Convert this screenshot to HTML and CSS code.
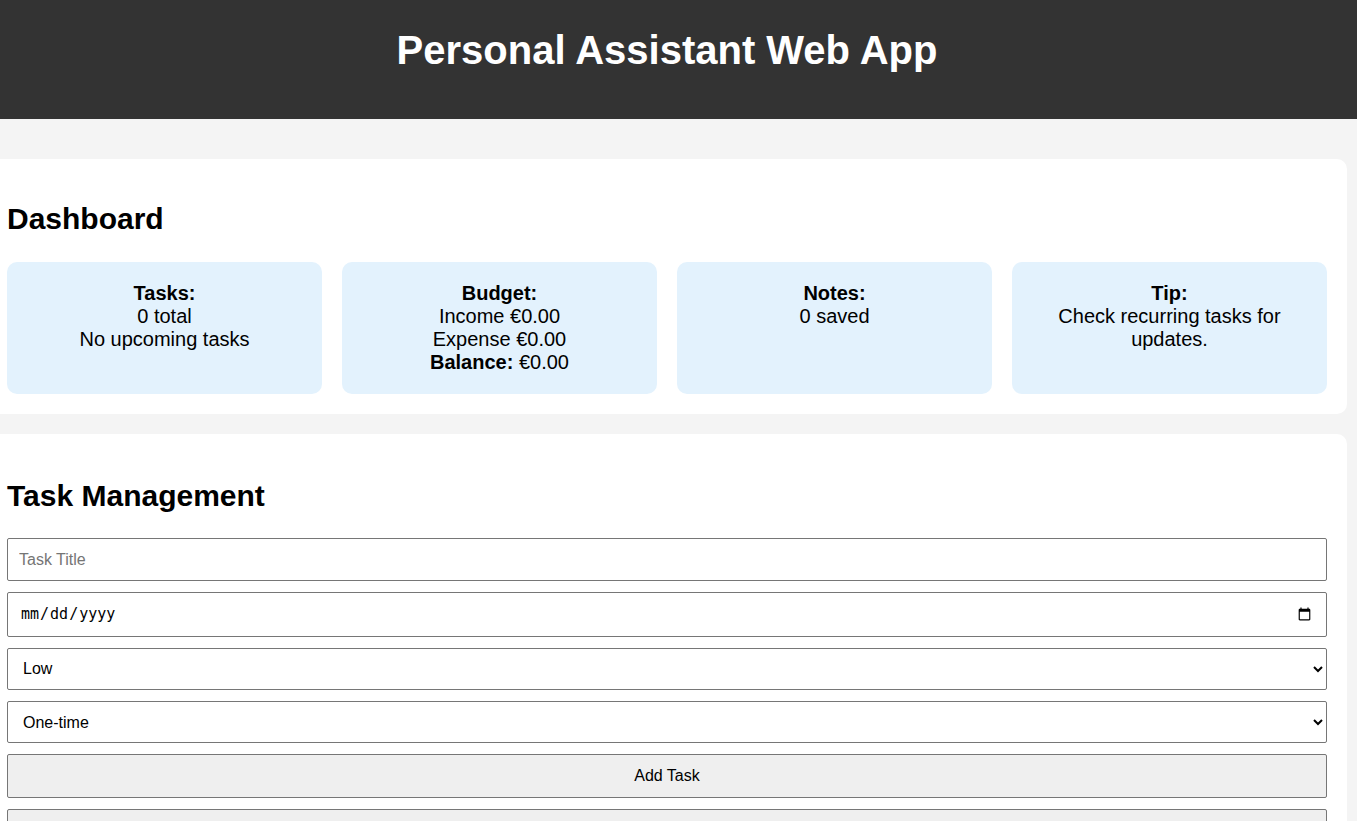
FILE: index.html
```html
<!DOCTYPE html>
<html lang="en">
<head>
<meta charset="utf-8">
<title>Personal Assistant Web App</title>
<link rel="stylesheet" href="styles.css">
</head>
<body>
<div class="page">
  <header class="app-header">
    <h1>Personal Assistant Web App</h1>
  </header>
  <main class="app-main">
    <section class="card">
      <h2 class="card-title dash-title">Dashboard</h2>
      <div class="dash-grid">
        <div class="dash-box"><strong>Tasks:</strong><br>0 total<br>No upcoming tasks</div>
        <div class="dash-box"><strong>Budget:</strong><br>Income €0.00<br>Expense €0.00<br><strong>Balance:</strong> €0.00</div>
        <div class="dash-box"><strong>Notes:</strong><br>0 saved</div>
        <div class="dash-box"><strong>Tip:</strong><br>Check recurring tasks for updates.</div>
      </div>
    </section>
    <section class="card">
      <h2 class="card-title task-title">Task Management</h2>
      <input class="field field-text" type="text" placeholder="Task Title">
      <input class="field field-date" type="date">
      <select class="field field-select">
        <option>Low</option>
        <option>Medium</option>
        <option>High</option>
      </select>
      <select class="field field-select">
        <option>One-time</option>
        <option>Daily</option>
        <option>Weekly</option>
      </select>
      <button class="field btn">Add Task</button>
      <button class="field btn btn-low">Sort Tasks</button>
      <ul class="task-list"></ul>
    </section>
  </main>
</div>
</body>
</html>
```
FILE: styles.css
```css
html, body {
  margin: 0;
  padding: 0;
  overflow: hidden;
}
body {
  background: #f4f4f4;
  font-family: "Liberation Sans", Arial, sans-serif;
  font-size: 20px;
  color: #000;
}
.page {
  width: 1400px;
  margin-left: -33px;
}
.app-header {
  background: #333;
  color: #fff;
  text-align: center;
  padding: 27px 0 46px;
}
.app-header h1 {
  margin: 0;
  font-size: 40px;
  line-height: 46px;
  font-weight: bold;
}
.app-main {
  padding: 40px 20px 20px;
}
.card {
  background: #fff;
  border-radius: 10px;
  padding: 20px;
  margin-bottom: 20px;
}
.card-title {
  font-size: 30px;
  line-height: 34.5px;
  margin: 24.9px 0 24.9px;
  font-weight: bold;
}
.dash-title {
  margin: 23px 0 25px;
}
.task-title {
  margin: 25.5px 0 24.5px;
}
.dash-grid {
  display: grid;
  grid-template-columns: repeat(4, 1fr);
  gap: 20px;
}
.dash-box {
  background: #e3f2fd;
  border-radius: 10px;
  padding: 20px;
  text-align: center;
  line-height: 23px;
}
.field {
  display: block;
  width: 100%;
  box-sizing: border-box;
  margin: 0 0 10.8px;
  font-family: "Liberation Sans", Arial, sans-serif;
  font-size: 16px;
  color: #000;
  border: 1px solid #767676;
  border-radius: 2px;
  background: #fff;
}
.field-text {
  height: 43px;
  padding: 0 11px;
}
.field-text::placeholder {
  color: #757575;
}
.field-date {
  height: 45px;
  padding: 0 12px 0 12px;
  font-family: "DejaVu Sans Mono", monospace;
  font-size: 15px;
}
.field-select {
  height: 42.5px;
  padding: 0 11px;
}
.btn {
  height: 43.7px;
  background: #efefef;
  text-align: center;
  padding: 0;
}
.btn-low {
  padding-top: 8px;
}
.task-list {
  list-style: none;
  padding: 0;
  margin: 0;
}
```
